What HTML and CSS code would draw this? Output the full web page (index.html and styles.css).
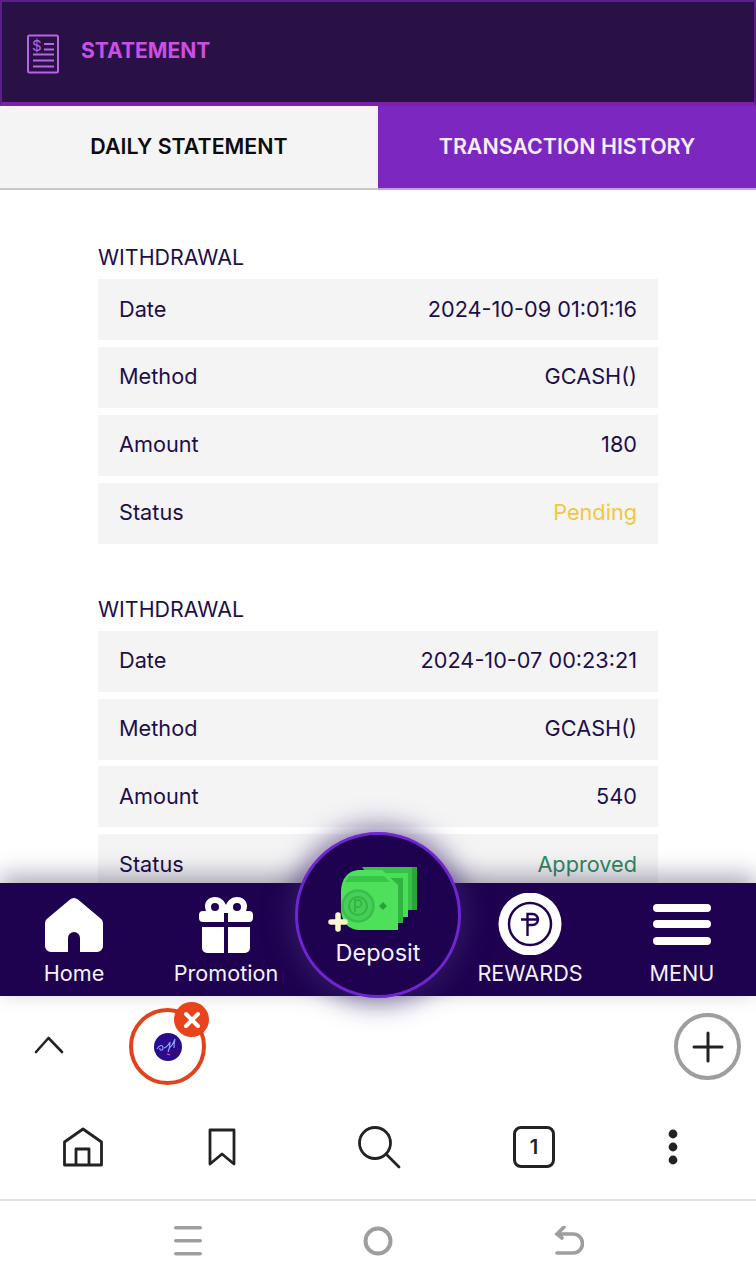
FILE: index.html
```html
<!DOCTYPE html>
<html lang="en">
<head>
  <meta charset="UTF-8" />
  <meta name="viewport" content="width=device-width, initial-scale=1.0" />
  <title>Statement</title>
  <link rel="stylesheet" href="styles.css">
</head>
<body>
  <div class="app">
    <header class="top">
      <svg class="top-icon" width="34" height="40" viewBox="0 0 34 40" fill="none" stroke="#b565e6" stroke-width="2">
        <rect x="2" y="1.5" width="30" height="37" rx="1.5" />
        <path d="M18 10h10M18 15.500h10M7 20.500h21M7 26.500h21M7 32.500h21" />
        <text x="6" y="16.500" class="dollar">$</text>
      </svg>
      <h1>STATEMENT</h1>
    </header>

    <div class="tabs">
      <div class="tab">DAILY STATEMENT</div>
      <div class="tab active">TRANSACTION HISTORY</div>
    </div>

    <main class="content">
      <section class="record">
        <h2>WITHDRAWAL</h2>
        <div class="row"><span>Date</span><span>2024-10-09 01:01:16</span></div>
        <div class="row"><span>Method</span><span>GCASH()</span></div>
        <div class="row"><span>Amount</span><span>180</span></div>
        <div class="row"><span>Status</span><span class="pending">Pending</span></div>
      </section>
      <section class="record">
        <h2>WITHDRAWAL</h2>
        <div class="row"><span>Date</span><span>2024-10-07 00:23:21</span></div>
        <div class="row"><span>Method</span><span>GCASH()</span></div>
        <div class="row"><span>Amount</span><span>540</span></div>
        <div class="row"><span>Status</span><span class="approved">Approved</span></div>
      </section>
    </main>

    <nav class="bottom">
      <a class="nav-item">
        <svg width="60" height="58" viewBox="0 0 60 58" fill="#fff">
          <path fill-rule="evenodd" d="M26 3.500a6 6 0 0 1 8 0L56 22a6 6 0 0 1 3 5v23a6 6 0 0 1-6 6H36V42a6 6 0 0 0-12 0v14H7a6 6 0 0 1-6-6V27a6 6 0 0 1 3-5z" />
        </svg>
        <span>Home</span>
      </a>
      <a class="nav-item">
        <svg width="56" height="58" viewBox="0 0 56 58" fill="#fff">
          <path fill-rule="evenodd" d="M28 9c2-5 6-8 11-8 6 0 10 4 10 9 0 2-.5 3.500-1 5h3a4 4 0 0 1 4 4v3a4 4 0 0 1-4 4H30V17h-4v9H5a4 4 0 0 1-4-4v-3a4 4 0 0 1 4-4h3c-.5-1.500-1-3-1-5 0-5 4-9 10-9 5 0 9 3 11 8zM17 7a4 4 0 1 0 0 8 4 4 0 0 0 0-8zM39 7a4 4 0 1 0 0 8 4 4 0 0 0 0-8z" />
          <path d="M4 31h22v26H9a5 5 0 0 1-5-5zM30 31h22v21a5 5 0 0 1-5 5H30z" />
        </svg>
        <span>Promotion</span>
      </a>
      <div class="nav-item"></div>
      <a class="nav-item">
        <svg class="coin" width="64" height="62" viewBox="0 0 64 62">
          <circle cx="32" cy="31" r="31.500" fill="#fff" />
          <circle cx="32" cy="31" r="21" fill="none" stroke="#1e0250" stroke-width="2.500" />
          <path d="M29.500 43V21h5a5.500 5.500 0 0 1 0 11h-5M23 26.500h18" fill="none" stroke="#1e0250" stroke-width="2.400" />
        </svg>
        <span>REWARDS</span>
      </a>
      <a class="nav-item">
        <svg width="58" height="58" viewBox="0 0 58 58" fill="#fff">
          <rect x="0" y="8" width="58" height="8" rx="4" />
          <rect x="0" y="24" width="58" height="8" rx="4" />
          <rect x="0" y="41" width="58" height="8" rx="4" />
        </svg>
        <span>MENU</span>
      </a>

      <a class="deposit">
        <svg width="92" height="76" viewBox="0 0 92 76">
          <path d="M30 5H85V48H60z" fill="#35c046" />
          <path d="M80 5H85V48H80z" fill="#2aa53a" />
          <path d="M30 11H76V55H60z" fill="#4bdc58" />
          <path d="M30 16H71V61H60z" fill="#2fb53f" />
          <path d="M28 8H50L66 23V68H28C16 68 9 60 9 46V30C9 17 16 8 28 8z" fill="#4ee05a" />
          <path d="M17 14H52L58 20H13z" fill="#38c649" />
          <circle cx="26" cy="44" r="15.500" fill="#46cf56" stroke="#3abd4b" stroke-width="2.500" />
          <circle cx="26" cy="44" r="9" fill="none" stroke="#35b547" stroke-width="2" />
          <path d="M23 50V38h3a3.500 3.500 0 0 1 0 7h-3" fill="none" stroke="#35b547" stroke-width="2" />
          <path d="M47 44l4-4 4 4-4 4z" fill="#2aa03c" />
          <path d="M6 53V67M-1 60H13" fill="none" stroke="#fdf7d2" stroke-width="5.500" stroke-linecap="round" />
        </svg>
        <span>Deposit</span>
      </a>
    </nav>

    <div class="tabstrip">
      <svg class="chevron" width="30" height="18" viewBox="0 0 30 18" fill="none" stroke="#222" stroke-width="2.600" stroke-linecap="round" stroke-linejoin="round">
        <path d="M2 16 14.500 2 28 16" />
      </svg>
      <div class="bubble">
        <svg width="28" height="28" viewBox="0 0 28 28" fill="none">
          <circle cx="14" cy="14" r="14" fill="#2a0b8c" />
          <path d="M14 22a14 14 0 0 0 12-4v-2l-8 3z" fill="#3d0a66" />
          <path d="M3 16c2-4 6-5 6-1 0 3-4 3-3 0M10 15c3-1 5-4 6-6 0 4-1 8-2 10M15 15c2-1 4-4 6-9-1 4-1 7-1 9" stroke="#8fa8ff" stroke-width="1.100" />
          <path d="M13 21l3 1" stroke="#e05ad0" stroke-width="1.200" />
        </svg>
        <span class="bubble-close">
          <svg width="18" height="18" viewBox="0 0 18 18" stroke="#fff" stroke-width="4" stroke-linecap="round">
            <path d="M3 3 15 15M15 3 3 15" />
          </svg>
        </span>
      </div>
      <div class="add-tab">
        <svg width="32" height="32" viewBox="0 0 32 32" stroke="#222" stroke-width="3" stroke-linecap="round">
          <path d="M16 2V30M2 16H30" />
        </svg>
      </div>
    </div>

    <div class="toolbar">
      <svg width="40" height="40" viewBox="0 0 40 40" fill="none" stroke="#222" stroke-width="2.800" stroke-linejoin="round">
        <path d="M1.500 15 20 2 38.500 15V38H1.500z" />
        <path d="M13 38V22H26V38" />
      </svg>
      <svg width="28" height="38" viewBox="0 0 28 38" fill="none" stroke="#222" stroke-width="2.800" stroke-linejoin="round">
        <path d="M2 2H26V36L14 26 2 36z" />
      </svg>
      <svg width="44" height="44" viewBox="0 0 44 44" fill="none" stroke="#222" stroke-width="2.800" stroke-linecap="round">
        <circle cx="18" cy="18" r="15.500" />
        <path d="M29 29 42 42" />
      </svg>
      <div class="tab-count">1</div>
      <svg width="10" height="36" viewBox="0 0 10 36" fill="#222">
        <circle cx="5" cy="5" r="4.400" />
        <circle cx="5" cy="18" r="4.400" />
        <circle cx="5" cy="31" r="4.400" />
      </svg>
    </div>

    <div class="sysnav">
      <svg width="28" height="30" viewBox="0 0 28 30" fill="#9e9e9e">
        <rect y="0" width="28" height="3.600" rx="1.800" />
        <rect y="13" width="28" height="3.600" rx="1.800" />
        <rect y="26" width="28" height="3.600" rx="1.800" />
      </svg>
      <svg width="30" height="30" viewBox="0 0 30 30" fill="none" stroke="#9e9e9e" stroke-width="4">
        <circle cx="15" cy="15" r="12.500" />
      </svg>
      <svg width="30" height="30" viewBox="0 0 30 30" fill="none" stroke="#9e9e9e" stroke-width="3.600" stroke-linecap="round">
        <path d="M3 8H19a8.500 8.500 0 0 1 0 19H3M10 1 3 8l5 4" />
      </svg>
    </div>
  </div>
</body>
</html>
```

FILE: styles.css
```css
* {
  box-sizing: border-box;
  font-family: 'Inter', 'Liberation Sans', sans-serif;
}
body {
  margin: 0;
  background: #fff;
}
.app {
  display: flex;
  flex-direction: column;
  width: 756px;
  height: 1280px;
  overflow: hidden;
}
.top {
  display: flex;
  align-items: center;
  gap: 21px;
  flex: none;
  height: 106px;
  padding: 0 0 4px 24px;
  background: #2a1145;
  border: 2px solid #5f1c8f;
  border-bottom: 4px solid #7a22a8;
}
.top-icon {
  margin-top: 8px;
}
.top h1 {
  margin: 0;
  font-size: 21.100px;
  font-weight: 650;
  color: #cb4fe4;
}
.dollar {
  font-size: 15px;
  font-family: 'Inter', sans-serif;
  fill: #b565e6;
  stroke: none;
}
.tabs {
  display: grid;
  grid-template-columns: 1fr 1fr;
  flex: none;
  height: 84px;
}
.tab {
  display: flex;
  align-items: center;
  justify-content: center;
  padding-bottom: 3px;
  background: #f4f4f4;
  border-bottom: 2px solid #c8c8c8;
  font-size: 21.400px;
  font-weight: 600;
  color: #0c0c0c;
}
.tab.active {
  background: #7d27c1;
  border-bottom-color: #c4a3e0;
  color: #f8eefc;
}
.content {
  flex: 1;
  min-height: 0;
  overflow: hidden;
  padding: 54px 98px 0;
}
.record {
  margin-bottom: 52px;
}
.record h2 {
  margin: 0 0 9px;
  font-size: 21.400px;
  line-height: 26px;
  font-weight: 400;
  color: #1e0f4a;
}
.row {
  display: flex;
  align-items: center;
  justify-content: space-between;
  height: 61px;
  margin-bottom: 6.900px;
  padding: 0 21px 2px;
  background: #f4f4f5;
  font-size: 21.700px;
  color: #1e0f4a;
}
.pending {
  color: #f2c73c;
}
.approved {
  color: #2e8b61;
}
.bottom {
  position: relative;
  display: grid;
  grid-template-columns: 148px 156px 148px 156px 148px;
  flex: none;
  height: 113px;
  background: #1e0250;
  box-shadow: 0 -8px 22px rgba(20, 10, 50, 0.35);
}
.nav-item {
  display: flex;
  flex-direction: column;
  align-items: center;
  padding-top: 13px;
  color: #f6f1fb;
  font-size: 21.600px;
  line-height: 26px;
}
.nav-item svg {
  flex: none;
  margin-bottom: 6px;
}
.nav-item .coin {
  margin: -3px 0 5px;
}
.deposit {
  position: absolute;
  top: -51px;
  left: 295px;
  display: flex;
  flex-direction: column;
  align-items: center;
  width: 166px;
  height: 166px;
  padding-top: 27px;
  border: 3px solid #6f25cf;
  border-radius: 50%;
  background: #1e0250;
  box-shadow: 0 0 26px 6px rgba(60, 40, 110, 0.6);
  color: #f6f1fb;
  font-size: 23.500px;
  line-height: 28px;
}
.deposit svg {
  margin: 0 0 1px 0;
  overflow: visible;
}
.tabstrip {
  display: flex;
  align-items: center;
  flex: none;
  height: 101px;
  padding: 0 15px 0 34px;
  background: #fff;
}
.chevron {
  flex: none;
  margin-top: -4px;
}
.bubble {
  position: relative;
  display: flex;
  align-items: center;
  justify-content: center;
  width: 77px;
  height: 77px;
  margin-left: 65px;
  border: 4px solid #e0441b;
  border-radius: 50%;
}
.bubble-close {
  position: absolute;
  top: -10px;
  right: -7px;
  display: flex;
  align-items: center;
  justify-content: center;
  width: 35px;
  height: 35px;
  border-radius: 50%;
  background: #e8431a;
}
.add-tab {
  display: flex;
  align-items: center;
  justify-content: center;
  width: 67px;
  height: 67px;
  margin-left: auto;
  border: 4px solid #9e9e9e;
  border-radius: 50%;
}
.toolbar {
  display: grid;
  grid-template-columns: 166px 112px 202px 108px 170px;
  align-items: center;
  justify-items: center;
  flex: none;
  height: 104px;
  padding-bottom: 2px;
  background: #fff;
  border-bottom: 2px solid #e2e2e2;
}
.tab-count {
  display: flex;
  align-items: center;
  justify-content: center;
  width: 42px;
  height: 42px;
  border: 3px solid #222;
  border-radius: 8px;
  font-size: 20px;
  font-weight: 600;
  color: #222;
}
.sysnav {
  display: flex;
  align-items: center;
  justify-content: center;
  gap: 161px;
  flex: none;
  height: 79px;
  padding-left: 2px;
  background: #fff;
}
```
